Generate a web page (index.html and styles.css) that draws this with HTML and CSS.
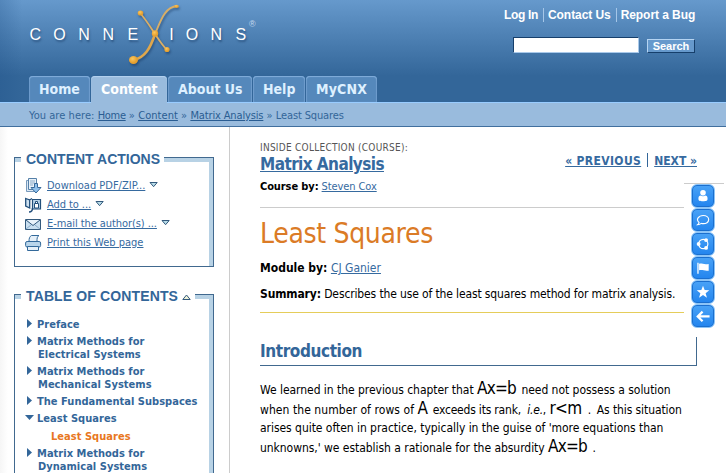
FILE: index.html
```html
<!DOCTYPE html>
<html lang="en">
<head>
<meta charset="utf-8">
<title>Least Squares - Connexions</title>
<link rel="stylesheet" href="styles.css">
</head>
<body>
<header class="header">
  <div class="masthead">
    <div class="logo" aria-label="Connexions">
      <div class="wordmark"><span>C</span><span>O</span><span>N</span><span>N</span><span>E</span><span></span><span class="thin">I</span><span>O</span><span>N</span><span>S</span></div>
      <span class="reg">®</span>
      <svg class="logo-x" width="54" height="66" viewBox="0 0 54 66">
        <defs>
          <radialGradient id="ball" cx=".4" cy=".35"><stop offset="0" stop-color="#fbc75e"/><stop offset="1" stop-color="#e5a030"/></radialGradient>
        </defs>
        <g fill="none" stroke="#d9ae66" stroke-linecap="round">
          <path d="M12 13C19 21 23 28 27 34S34 45 39 50" stroke-width="1.8"/>
          <path d="M49 6C36 7 32 23 27 34" stroke-width="1.8"/>
          <path d="M27 34C22 49 17 57 6 60" stroke-width="2.6" stroke="#dfa74c"/>
        </g>
        <g fill="url(#ball)">
          <ellipse cx="12.5" cy="13" rx="2.8" ry="2.6"/><ellipse cx="48.500" cy="6.300" rx="2.400" ry="1.600"/>
          <circle cx="27" cy="33.500" r="3.200"/><circle cx="39" cy="49.500" r="2.600"/><ellipse cx="5.500" cy="60" rx="4.500" ry="4"/>
        </g>
      </svg>
    </div>
    <div class="tools">
      <nav class="user-links"><a class="login">Log In</a><a>Contact Us</a><a>Report a Bug</a></nav>
      <form class="search"><input type="text" aria-label="Search"><button type="button">Search</button></form>
    </div>
  </div>
  <nav class="tabs">
    <a class="tab home">Home</a><a class="tab content active">Content</a><a class="tab about">About Us</a><a class="tab help">Help</a><a class="tab mycnx">MyCNX</a>
  </nav>
</header>
<div class="crumbs">You are here: <a class="c-home">Home</a> » <a>Content</a> » <a class="c-ma">Matrix Analysis</a> » <span class="c-ma">Least Squares</span></div>

<div class="page">
  <aside class="side">
    <section class="box actions">
      <h2 class="box-title">CONTENT ACTIONS</h2>
      <ul class="action-list">
        <li>
          <svg width="17" height="16" viewBox="0 0 17 16"><path d="M3.500 2.500h-2v11h9" fill="#dce9f5" stroke="#7799bb"/><path d="M3.500.5h8v11h-8z" fill="#e8f1f9" stroke="#5580a8"/><path d="M5 3h5M5 5h5M5 7h3" stroke="#8aabc9"/><path d="M9.500 5.500h3v4h3.500l-5 5.500-5-5.500h3.500z" fill="#8fc0ec" stroke="#36699a"/></svg>
          <a>Download PDF/ZIP...</a><svg class="drop" width="9" height="6" viewBox="0 0 9 6"><path d="M1 .5h7.200L4.600 4.700z" fill="#b8dce8" stroke="#33597c"/></svg>
        </li>
        <li>
          <svg width="17" height="16" viewBox="0 0 17 16"><path d="M.7 1.500l4 1.500v8l-4-2zM4.700 3L7 1.500" fill="#cfe2f1" stroke="#224f7b" stroke-width="1.300"/><path d="M7.500 2.500h8v9.500h-8z" fill="#b8d4ea" stroke="#224f7b" stroke-width="1.200"/><path d="M9.500 6.500h4v4.500h-4zM10.500 6V4.500h2V6" fill="#fff" stroke="#224f7b"/><path d="M7.500 11c0 3-2 4-3.500 4" fill="none" stroke="#224f7b" stroke-width="1.500"/></svg>
          <a class="a2">Add to ...</a><svg class="drop" width="9" height="6" viewBox="0 0 9 6"><path d="M1 .5h7.200L4.600 4.700z" fill="#b8dce8" stroke="#33597c"/></svg>
        </li>
        <li>
          <svg width="17" height="16" viewBox="0 0 17 16"><path d="M.5 3.500h15v10H.5z" fill="#c9dff0" stroke="#33597c"/><path d="M1 13l5-4M15 13l-5-4" fill="none" stroke="#8aabc9"/><path d="M1.500 4h13L8 9z" fill="#e9f2fa"/><path d="M1 4l7 5.500L15 4" fill="none" stroke="#33597c"/></svg>
          <a class="a3">E-mail the author(s) ...</a><svg class="drop" width="9" height="6" viewBox="0 0 9 6"><path d="M1 .5h7.200L4.600 4.700z" fill="#b8dce8" stroke="#33597c"/></svg>
        </li>
        <li>
          <svg width="17" height="16" viewBox="0 0 17 16"><path d="M4 6.500c0-3 .5-5 2.500-6h7.500c-2 1-2 3-2 6z" fill="#e6f0f8" stroke="#33699a"/><rect x=".6" y="6.500" width="15" height="5.500" rx="1.500" fill="#b9d5ea" stroke="#33699a"/><path d="M2.500 11.500h11v4h-11z" fill="#e6f0f8" stroke="#33699a"/></svg>
          <a>Print this Web page</a>
        </li>
      </ul>
    </section>
    <section class="box toc">
      <h2 class="box-title">TABLE OF CONTENTS<svg width="9" height="6" viewBox="0 0 9 6"><path d="M.8 5.500h7.400L4.500 1z" fill="#eef2d8" stroke="#33597c"/></svg></h2>
      <ul class="toc-list">
        <li>Preface</li>
        <li>Matrix Methods for<span>Electrical Systems</span></li>
        <li>Matrix Methods for<span>Mechanical Systems</span></li>
        <li>The Fundamental Subspaces</li>
        <li class="open">Least Squares</li>
        <li class="current">Least Squares</li>
        <li>Matrix Methods for<span>Dynamical Systems</span></li>
      </ul>
    </section>
  </aside>

  <main class="main">
    <div class="course">
      <div>
        <div class="inside">INSIDE COLLECTION (COURSE):</div>
        <div class="course-title"><a>Matrix Analysis</a></div>
        <div class="course-by"><b>Course by:</b> <a>Steven Cox</a></div>
      </div>
      <nav class="pager"><a class="prev">« PREVIOUS</a><a class="next">NEXT »</a></nav>
    </div>
    <div class="module">
      <h1>Least Squares</h1>
      <div class="meta"><b>Module by:</b> <a>CJ Ganier</a></div>
      <div class="meta summary"><b>Summary:</b> Describes the use of the least squares method for matrix analysis.</div>
    </div>
    <h2 class="section-title">Introduction</h2>
    <p class="text">
      <span class="l1">We learned in the previous chapter that <span class="math">Ax=b</span> need not possess a solution</span>
      <span class="l2">when the number of rows of <span class="math">A</span> <span class="rank">exceeds its rank, <i>i.e.</i>,</span> <span class="math rm">r&lt;m</span> . <span class="as">As this situation</span></span>
      <span class="l3">arises quite often in practice, typically in the guise of 'more equations than</span>
      <span class="l4">unknowns,' we establish a rationale for the absurdity <span class="math">Ax=b</span> .</span>
    </p>
  </main>
</div>

<div class="dock">
  <a><svg viewBox="0 0 16 16"><circle cx="8" cy="4.200" r="3.200"/><path d="M5 7.500C3 8 2.800 9.500 2.800 11.500c0 2 1.200 2.500 5.200 2.500s5.200-.5 5.200-2.500c0-2-.2-3.500-2.200-4-1.500 1.200-4.500 1.200-6 0z"/></svg></a>
  <a><svg viewBox="0 0 16 16"><path class="line" d="M3.500 10.800C-.5 7.500 3 2.800 8.300 2.800c3.500 0 6.200 2 6.200 4.700 0 3-3 4.900-6.500 4.700-1 0-1.300-.1-2-.3-1 .9-2.500 1.500-4.200 1.500 1-.7 1.600-1.500 1.700-2.600z"/></svg></a>
  <a><svg viewBox="0 0 16 16"><circle class="line" cx="8.300" cy="8" r="5.300"/><circle cx="3" cy="8" r="2.200"/><circle cx="11.500" cy="3.500" r="2.200"/><circle cx="11.500" cy="12.500" r="2.200"/></svg></a>
  <a><svg viewBox="0 0 16 16"><path d="M1.500 2H3v12.500H1.500z"/><path d="M3.500 3.200c3.500-1 4.500 1.300 11 .3v7.500c-5 .8-7-1.500-11-.3z"/></svg></a>
  <a><svg viewBox="0 0 16 16"><path d="M8 .8l1.900 5 5.300.2-4.200 3.300 1.500 5.200L8 11.500l-4.500 3L5 9.300.8 6l5.300-.2z"/></svg></a>
  <a><svg viewBox="0 0 16 16"><path class="arrow" d="M15.500 8.500H2M7.500 3L2 8.500 7.500 14"/></svg></a>
</div>
</body>
</html>
```
FILE: styles.css
```css
* { box-sizing: border-box; }
body {
  margin: 0;
  height: 473px;
  overflow: hidden;
  background: #fff;
  color: #000;
  font-family: "DejaVu Sans Condensed", "DejaVu Sans", sans-serif;
  font-size: 12px;
}
ul { margin: 0; padding: 0; list-style: none; }
h1, h2, p { margin: 0; }
a { color: #366a9f; text-decoration: underline; }

/* Header */
.header {
  height: 102px;
  display: flex;
  flex-direction: column;
  justify-content: space-between;
  background:
    linear-gradient(90deg, rgba(30, 80, 135, .25), rgba(30, 80, 135, 0) 22px),
    linear-gradient(#6699cc 0, #336699 76px);
}
.masthead { display: flex; justify-content: space-between; height: 76px; }
.logo { position: relative; width: 270px; }
.wordmark {
  display: flex;
  padding: 25px 0 0 23px;
  color: #fff;
  font: 16px/20px "Liberation Sans", sans-serif;
  text-shadow: 1px 2px 2px rgba(20, 50, 90, .5);
}
.wordmark span { flex: none; width: 24.4px; text-align: center; }
.wordmark .thin { margin-left: -10px; margin-right: -4px; }
.reg { position: absolute; left: 249px; top: 18px; color: #c2d9ef; font: 9px/12px "Liberation Sans", sans-serif; }
.logo-x { position: absolute; left: 128px; top: 0; filter: drop-shadow(1px 2px 1px rgba(20, 50, 90, .5)); }
.tools { width: 222px; padding-top: 8px; }
.user-links { display: flex; height: 14px; font: bold 12px/14px "Liberation Sans", sans-serif; letter-spacing: -.07px; }
.user-links a {
  color: #fff;
  text-decoration: none;
  white-space: nowrap;
  padding-right: 5px;
  margin-right: 4px;
  border-right: 1px solid #a5c6e8;
}
.user-links .login { letter-spacing: -.33px; }
.user-links a:last-child { border: 0; margin: 0; padding: 0; }
.search { display: flex; align-items: flex-end; gap: 8px; padding: 15px 0 0 9px; }
.search input {
  width: 126px; height: 16px; padding: 0; border-radius: 0;
  border: 1px solid; border-color: #163f6b #a9c9ea #a9c9ea #163f6b;
  background: #fff;
}
.search button {
  width: 48px; height: 14px; padding: 0; border-radius: 0;
  border: 1px solid; border-color: #b5d4f2 #163f6b #163f6b #b5d4f2;
  background: #6699cc; color: #fff;
  font: bold 11px/12px "Liberation Sans", sans-serif;
}
.tabs { display: flex; gap: 1px; padding-left: 29px; height: 26px; }
.tab {
  height: 26px;
  padding-left: 10px;
  border-radius: 4px 4px 0 0;
  background: #5588bb;
  box-shadow: inset 0 1px 1px #82addb, inset 1px 0 1px #6e9dcc, inset -1px 0 1px #6e9dcc;
  color: #def0ff;
  font-size: 14px;
  font-weight: bold;
  line-height: 26px;
  text-decoration: none;
}
.tab.active { background: #99bbdd; box-shadow: inset 0 1px 1px #b5d3f0; color: #fff; margin-bottom: -1px; height: 27px; }
.home { width: 61px; }
.content { width: 76px; }
.about { width: 84px; }
.help { width: 52px; }
.mycnx { width: 71px; letter-spacing: .15px; }
.crumbs {
  height: 25px;
  padding-left: 29px;
  background: #99bbdd;
  border-top: 1px solid #99ccff;
  border-bottom: 1px solid #416f9e;
  color: #336699;
  font-size: 11px;
  line-height: 25px;
  letter-spacing: .05px;
  white-space: nowrap;
}
.crumbs a { color: #2a5d92; }
.crumbs .c-home { letter-spacing: -.3px; }
.crumbs .c-ma { letter-spacing: -.14px; }

/* Columns */
.page { display: flex; height: 346px; }
.side {
  width: 230px;
  flex: none;
  padding: 30px 15px 0 14px;
  border-right: 1px solid #ccc;
  background: linear-gradient(90deg, #f6f6f6, #fff 8px);
}
.box {
  width: 200px;
  color: #336699;
  border: 1px solid #41698f;
  box-shadow: inset 0 4px #b8d2e5, inset -4px 0 #b8d2e5;
}
.box-title {
  display: flex;
  width: fit-content;
  height: 14px;
  margin: -6px 0 0 6px;
  padding: 0 4px 0 5px;
  background: #fff;
  font: bold 14px/14px "Liberation Sans", sans-serif;
  white-space: nowrap;
}
.actions { height: 110px; margin-bottom: 27px; }
.action-list { padding: 10px 0 0 10px; }
.action-list li {
  display: flex;
  align-items: center;
  height: 19px;
  font-size: 11px;
  line-height: 19px;
  white-space: nowrap;
}
.action-list li > svg:first-child { margin-right: 5px; }
.action-list .drop { margin-left: 4px; margin-bottom: 2px; }
.action-list .a2, .action-list .a3 { letter-spacing: -.07px; }

.toc { height: 200px; }
.toc .box-title { letter-spacing: .13px; }
.toc .box-title svg { margin: 5px 0 0 4px; }
.toc-list { padding: 15px 0 0 12px; font-weight: bold; font-size: 11px; line-height: 13px; }
.toc-list li { display: grid; grid-template-columns: 10px auto; margin-bottom: 4px; white-space: nowrap; letter-spacing: .03px; }
.toc-list li::before {
  content: "";
  width: 5px;
  height: 9px;
  margin-top: 1px;
  background: #336699;
  clip-path: polygon(0 0, 100% 50%, 0 100%);
}
.toc-list li span { grid-column: 2; padding-left: 1px; }
.toc-list .open { margin-bottom: 5px; }
.toc-list .open::before { width: 9px; height: 5px; margin: 3px 0 0 -2px; clip-path: polygon(0 0, 100% 0, 50% 100%); }
.toc-list .current { display: block; padding-left: 24px; color: #e87722; }
.toc-list .current::before { content: none; }

/* Module */
.main { width: 467px; padding: 15px 0 0 30px; }
.course { display: flex; justify-content: space-between; height: 65px; width: 437px; white-space: nowrap; }
.inside { height: 12px; color: #555; font-size: 10px; line-height: 12px; letter-spacing: .26px; }
.course-title { height: 20px; font-size: 17px; font-weight: bold; line-height: 20px; letter-spacing: -.57px; }
.course-by { margin-top: 5px; font-size: 11px; line-height: 16px; letter-spacing: -.1px; }
.pager { display: flex; padding-top: 12px; font-size: 12px; font-weight: bold; line-height: 14px; }
.pager .prev { letter-spacing: .36px; }
.pager .next { position: relative; margin-left: 13px; }
.pager .next::before { content: ""; position: absolute; left: -7px; top: -1px; width: 1px; height: 14px; background: #336699; }
.module { width: 424px; height: 106px; border-top: 1px solid #ccc; border-bottom: 1px solid #e5cd5a; white-space: nowrap; }
h1 { margin-top: 8px; color: #db7b26; font-size: 28px; font-weight: normal; line-height: 36px; letter-spacing: -.33px; }
.meta { margin-top: 7px; line-height: 18px; }
.summary { margin-top: 8px; letter-spacing: -.13px; }
.section-title {
  width: 437px;
  height: 29px;
  margin-top: 24px;
  border: solid #41698f;
  border-width: 0 1px 1px 0;
  color: #336699;
  font-size: 17px;
  line-height: 28px;
  letter-spacing: -.4px;
}
.text { margin-top: 14px; white-space: nowrap; letter-spacing: -.04px; }
.text > span { display: block; }
.l1, .l2 { height: 20px; line-height: 20px; }
.l2 { letter-spacing: .07px; }
.l3 { height: 16px; line-height: 16px; }
.l4 { height: 24px; line-height: 24px; }
.math { margin-right: 2px; font-size: 17px; line-height: 0; letter-spacing: -.76px; }
.rank { letter-spacing: -.2px; }
.rank i { margin-left: 3px; }
.rm { margin-right: 3px; }
.as { margin-left: 2px; letter-spacing: -.1px; }

/* Floating share dock */
.dock { position: absolute; left: 684px; top: 183px; width: 40px; padding-left: 7px; border-top: 1px solid #ccc; }
.dock a {
  display: flex;
  align-items: center;
  justify-content: center;
  width: 24px;
  height: 24px;
  border: 1px solid #8cc4f7;
  border-radius: 6px;
  background: linear-gradient(#4aa3f7, #2284ee);
  box-shadow: inset 0 0 0 1px #1b6fce;
}
.dock svg { width: 14px; height: 14px; fill: #fff; }
.dock .line { fill: none; stroke: #fff; stroke-width: 1.300; }
.dock .arrow { fill: none; stroke: #fff; stroke-width: 2.600; }
```
